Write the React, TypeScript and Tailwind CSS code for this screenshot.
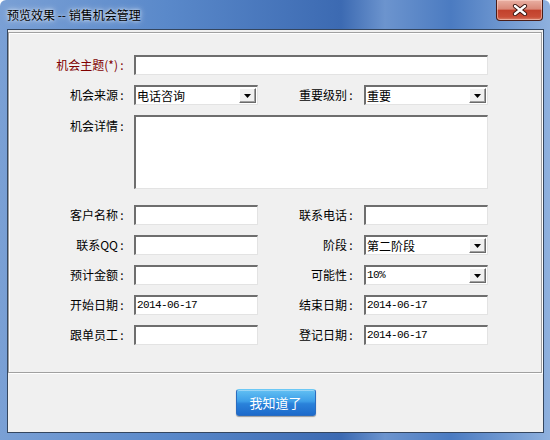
import type { ReactNode } from "react";

const cjk = "font-['Noto_Sans_CJK_SC','Noto_Sans',sans-serif]";
const mono = "font-['Liberation_Mono','Noto_Sans_CJK_SC',monospace] text-[11px] tracking-[-0.6px]";
const sunken =
  "border-t-2 border-l-2 border-b border-r border-t-[#6e6e6e] border-l-[#6e6e6e] border-b-[#e3e3e3] border-r-[#e3e3e3] bg-white";

function Label({ children, w, red }: { children: ReactNode; w: string; red?: boolean }) {
  return (
    <div className={`${w} shrink-0 text-right text-[12px] leading-[20px] ${red ? "text-[#800000]" : "text-black"}`}>
      {children}
      <span className="inline-block w-[8px] text-center">:</span>
    </div>
  );
}

function Input({ value, w = "w-[124px]" }: { value?: string; w?: string }) {
  return (
    <div className={`${w} h-[20px] ${sunken} flex items-center pl-[1px] leading-none text-black ${mono}`}>
      {value}
    </div>
  );
}

function Select({ value, mono: isMono }: { value: string; mono?: boolean }) {
  return (
    <div className={`flex h-[20px] w-[124px] items-center ${sunken}`}>
      <span className={`flex-1 pl-[1px] leading-none text-black ${isMono ? mono : "text-[12px]"}`}>{value}</span>
      <div className="mr-[1px] flex h-[15px] w-[17px] items-center justify-center border border-t-white border-l-white border-b-[#6a6a6a] border-r-[#6a6a6a] bg-[#f0f0f0] shadow-[inset_-1px_-1px_0_#a0a0a0]">
        <svg width="7" height="4" viewBox="0 0 7 4">
          <path d="M0 0h7L3.5 4z" fill="#000" />
        </svg>
      </div>
    </div>
  );
}

export default function App() {
  return (
    <div className={`${cjk} h-[440px] w-[550px] overflow-hidden rounded-t-[6px] bg-[linear-gradient(90deg,#7aa0d5_0%,#5a89ca_30%,#3c6ab2_62%,#6c94ce_70%,#4b7bc1_82%,#8fb1de_100%)]`}>
      {/* title bar */}
      <div className="flex h-[29px] items-start justify-between">
        <div className="pl-[7px] pt-[7px] text-[12px] leading-[16px] text-black [text-shadow:0_0_6px_rgba(255,255,255,0.9),0_0_3px_rgba(255,255,255,0.7)]">
          预览效果 -- 销售机会管理
        </div>
        <div className="mr-[7px] flex h-[21px] w-[47px] items-center justify-center rounded-b-[4px] border border-t-0 border-[#4a1d17] bg-[linear-gradient(180deg,#e9b0a3_0%,#d98878_45%,#c2412c_52%,#c94e38_85%,#d9826a_100%)] shadow-[inset_0_0_0_1px_rgba(255,220,210,0.5)]">
          <svg width="16" height="12" viewBox="0 0 16 12">
            <path d="M3 2l10 8M13 2L3 10" stroke="#3a1610" strokeWidth="4.2" strokeLinecap="round" />
            <path d="M3 2l10 8M13 2L3 10" stroke="#fff" strokeWidth="2.4" strokeLinecap="round" />
          </svg>
        </div>
      </div>

      {/* client area */}
      <div className="ml-[7px] h-[404px] w-[537px] border border-[#34465f] bg-[#f0f0f0] pt-[2px]">
        <div className="h-[341px] w-[534px] border border-[#a0a0a0] shadow-[inset_1px_1px_0_#fff,1px_1px_0_#fff] pt-[22px]">
          <div className="flex h-[20px] items-center">
            <Label w="w-[117px]" red>机会主题(*)</Label>
            <div className="ml-[8px]">
              <Input w="w-[354px]" />
            </div>
          </div>

          <div className="mt-[10px] flex h-[20px] items-center">
            <Label w="w-[117px]">机会来源</Label>
            <div className="ml-[8px]">
              <Select value="电话咨询" />
            </div>
            <Label w="w-[97px]">重要级别</Label>
            <div className="ml-[9px]">
              <Select value="重要" />
            </div>
          </div>

          <div className="mt-[10px] flex items-start">
            <div className="pt-[1px]">
              <Label w="w-[117px]">机会详情</Label>
            </div>
            <div className={`ml-[8px] h-[74px] w-[354px] ${sunken}`} />
          </div>

          <div className="mt-[16px] flex flex-col gap-[10px]">
            <div className="flex h-[20px] items-center">
              <Label w="w-[117px]">客户名称</Label>
              <div className="ml-[8px]"><Input /></div>
              <Label w="w-[97px]">联系电话</Label>
              <div className="ml-[9px]"><Input /></div>
            </div>
            <div className="flex h-[20px] items-center">
              <Label w="w-[117px]">联系QQ</Label>
              <div className="ml-[8px]"><Input /></div>
              <Label w="w-[97px]">阶段</Label>
              <div className="ml-[9px]"><Select value="第二阶段" /></div>
            </div>
            <div className="flex h-[20px] items-center">
              <Label w="w-[117px]">预计金额</Label>
              <div className="ml-[8px]"><Input /></div>
              <Label w="w-[97px]">可能性</Label>
              <div className="ml-[9px]"><Select value="10%" mono /></div>
            </div>
            <div className="flex h-[20px] items-center">
              <Label w="w-[117px]">开始日期</Label>
              <div className="ml-[8px]"><Input value="2014-06-17" /></div>
              <Label w="w-[97px]">结束日期</Label>
              <div className="ml-[9px]"><Input value="2014-06-17" /></div>
            </div>
            <div className="flex h-[20px] items-center">
              <Label w="w-[117px]">跟单员工</Label>
              <div className="ml-[8px]"><Input /></div>
              <Label w="w-[97px]">登记日期</Label>
              <div className="ml-[9px]"><Input value="2014-06-17" /></div>
            </div>
          </div>
        </div>

        <div className="mt-[16px] flex justify-center">
          <button className="flex h-[27px] w-[80px] items-center justify-center rounded-[3px] border border-[#2a6cc0] border-t-[#6cc8f5] bg-[linear-gradient(180deg,#62c0f3_0%,#3d9ee8_45%,#2a82da_55%,#1d6acb_100%)] text-[13px] leading-none text-white shadow-[0_1px_1px_rgba(0,0,0,0.35),inset_0_1px_0_rgba(255,255,255,0.35)]">
            我知道了
          </button>
        </div>
      </div>
    </div>
  );
}
